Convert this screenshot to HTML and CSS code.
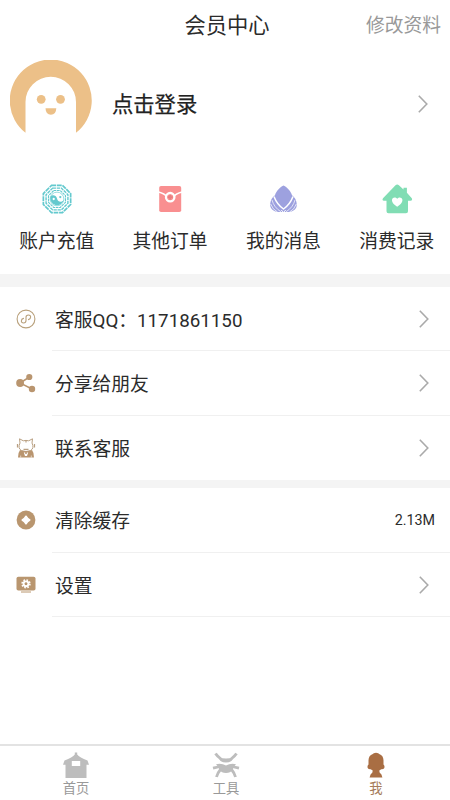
FILE: index.html
```html
<!DOCTYPE html>
<html lang="zh-CN">
<head>
<meta charset="utf-8">
<title>会员中心</title>
<link rel="stylesheet" href="styles.css">
</head>
<body>
<svg class="defs" width="0" height="0">
  <symbol id="chevron" viewBox="0 0 12 20"><path d="M1.8 1.8 9.8 10 1.8 18.2" fill="none" stroke="currentColor" stroke-width="1.6"/></symbol>
</svg>
<div class="app">
  <header class="header">
    <h1 class="title">会员中心</h1>
    <a class="edit">修改资料</a>
  </header>

  <section class="profile">
    <svg class="avatar" viewBox="0 0 82 82">
      <path d="M15.5 72.8A41 41 0 1 1 66 72.8V42a25.2 25.2 0 0 0-50.5 0Z" fill="#ecc088"/>
      <circle cx="31.2" cy="39.3" r="4.4" fill="#ecc088"/>
      <circle cx="50.5" cy="39.3" r="4.4" fill="#ecc088"/>
      <path d="M35.5 48.3h10.8q-.3 6.5-5.4 6.5t-5.4-6.5Z" fill="#ecc088"/>
    </svg>
    <span class="login">点击登录</span>
    <svg class="chevron"><use href="#chevron"/></svg>
  </section>

  <nav class="shortcuts">
    <a class="shortcut">
      <svg viewBox="-1 -1 34 34" fill="none" stroke="#63c9ce">
        <path d="M10.2 1.5h11.6l8.7 8.7v11.6l-8.7 8.7H10.2l-8.7-8.7V10.2Z" stroke-width="1.8" stroke-dasharray="5 .8"/>
        <path d="M11.4 4.4h9.2l7 7v9.2l-7 7h-9.2l-7-7v-9.2Z" stroke-width="1.5" stroke-dasharray="3.5 .8"/>
        <path d="M12.5 7h7l5.500 5.500v7L19.500 25h-7L7 19.500v-7Z" stroke-width="1.2" stroke-dasharray="2.8 .7"/>
        <circle cx="16" cy="16" r="7.3" fill="#fff" stroke-width=".7"/>
        <path d="M9 13.500c2-2.500 6-2 7 2s5 4.500 7.200 1.500A7.300 7.300 0 1 1 9 13.500Z" fill="#63c9ce" stroke="none"/>
        <circle cx="12.500" cy="16" r="1.200" fill="#fff" stroke="none"/>
        <circle cx="19.500" cy="14" r="1.200" fill="#63c9ce" stroke="none"/>
      </svg>
      <span>账户充值</span>
    </a>
    <a class="shortcut">
      <svg viewBox="0 0 32 32">
        <rect x="5.200" y="3" width="22" height="26" rx="1.800" fill="#f98f90"/>
        <path d="M4.500 9q6 1.500 8 4.500M28 9q-6 1.500-8 4.500" fill="none" stroke="#fff" stroke-width="1.800"/>
        <circle cx="16.200" cy="14.200" r="4.200" fill="#f98f90" stroke="#fff" stroke-width="2.300"/>
        <path d="M16.200 11.800v4.800M13.800 14.200h4.800" stroke="#e97f80" stroke-width="1.700"/>
      </svg>
      <span>其他订单</span>
    </a>
    <a class="shortcut">
      <svg viewBox="0 0 32 32">
        <path d="M16.500 2.500C20.500 4.500 24 8.500 25 12.200 28.500 14.500 30.500 19.500 29.500 24 28 28 23.500 29 21 29h-9C9.500 29 5 28 3.500 24 2.500 19.500 4.500 14.500 8 12.200 9 8.500 12.500 4.500 16.500 2.500Z" fill="#9da1df"/>
        <path d="M7 13.500Q10 21.500 16.500 26 23 21.500 26 13.500" fill="none" stroke="#fff" stroke-width="1.500"/>
        <path d="M14.300 27l2.200 2.500 2.200-2.500" fill="none" stroke="#fff" stroke-width="1"/>
        <path d="M5 17Q7 24.500 14 28.800M3.700 21Q5.500 26.500 10.500 29M28 17Q26 24.500 19 28.800M29.300 21Q27.500 26.500 22.500 29" fill="none" stroke="#fff" stroke-width=".7"/>
      </svg>
      <span>我的消息</span>
    </a>
    <a class="shortcut">
      <svg viewBox="0 0 32 32">
        <path d="M14.500 2.300q1.700-1.500 3.400 0L22.500 6.500V4.700h3.400V9.700l4.900 5.600q1 2-1.200 2.500H27v10.500q0 2-2 2H7.500q-2 0-2-2V17.800h-2.600q-2.200-.5-.9-2.500Z" fill="#81ddb4"/>
        <path d="M16.200 23.800C13.500 22 10.700 19.700 11 16.800c.5-3 4.200-3 5.200-.9 1-2.100 4.700-2.100 5.200.9.300 2.900-2.500 5.200-5.200 7Z" fill="#fff"/>
      </svg>
      <span>消费记录</span>
    </a>
  </nav>

  <section class="list contact">
    <a class="row">
      <svg class="icon" viewBox="0 0 20 20" fill="none" stroke="#b9a17c">
        <circle cx="10" cy="10" r="8.900" stroke-width="1.100"/>
        <path d="M7.500 9.400C4.700 10.100 4.600 14 7.500 14c1.600 0 2.500-1.100 2.500-2.500V8.300c0-1.300 1-2.300 2.500-2.300 2.900 0 2.800 3.800 0 4.600" stroke-width="1.100" stroke-linecap="round"/>
      </svg>
      <span class="label">客服QQ：1171861150</span>
      <svg class="chevron"><use href="#chevron"/></svg>
    </a>
    <a class="row">
      <svg class="icon" viewBox="0 0 20 20">
        <path d="M13.500 4 4 10l12 6" fill="none" stroke="#b9956f" stroke-width="1.500"/>
        <g fill="#b9956f"><circle cx="13.300" cy="4" r="3.100"/><circle cx="4.100" cy="10" r="3.900"/><circle cx="16" cy="16" r="3.200"/></g>
      </svg>
      <span class="label">分享给朋友</span>
      <svg class="chevron"><use href="#chevron"/></svg>
    </a>
    <a class="row">
      <svg class="icon" viewBox="0 0 20 20">
        <path d="M4 5 3.500.8 7.300 2.800q2.700-.8 5.400 0L16.500.8 16 5q2.500 5-1.300 7.500-4.700 2-9.400 0Q1.500 10 4 5Z" fill="#fff" stroke="#b9a082" stroke-width="1"/>
        <path d="M1.500 6v3.500M18.500 6v3.500M7.500 11.300h5M10 2.500v2" stroke="#b9a082" stroke-width="1.200"/>
        <path d="M4 12q6 2.500 12 0 2 2.500 2 7.500H2q0-5 2-7.500Z" fill="#b9956f"/>
        <path d="M7.800 14.500h4.400l-1.200 3.500h-2Z" fill="#fff"/>
        <path d="M4.700 17.500v2M15.300 17.500v2" stroke="#fff" stroke-width=".6"/>
        <circle cx="10" cy="15" r="1" fill="#b9956f"/>
      </svg>
      <span class="label">联系客服</span>
      <svg class="chevron"><use href="#chevron"/></svg>
    </a>
  </section>

  <section class="list system">
    <a class="row">
      <svg class="icon" viewBox="0 0 20 20">
        <circle cx="10" cy="10" r="9.400" fill="#b9966f"/>
        <path d="M10 6.200q1.300 2.500 3.800 3.800-2.500 1.300-3.800 3.800Q8.700 11.300 6.200 10q2.500-1.300 3.800-3.800Z" fill="#fff" stroke="#fff" stroke-width="1.500" stroke-linejoin="round"/>
      </svg>
      <span class="label">清除缓存</span>
      <span class="value">2.13M</span>
    </a>
    <a class="row">
      <svg class="icon" viewBox="0 0 20 20">
        <rect x=".5" y="1.800" width="19" height="13.800" rx="1.800" fill="#b9966f"/>
        <path d="M5 17h10" stroke="#b9966f" stroke-width="1"/>
        <circle cx="10" cy="8.800" r="3.900" fill="none" stroke="#fff" stroke-width="1.600" stroke-dasharray="1.600 1.463"/>
        <circle cx="10" cy="8.800" r="2.400" fill="none" stroke="#fff" stroke-width="2"/>
        <circle cx="10" cy="8.800" r="1.200" fill="#b9966f"/>
      </svg>
      <span class="label">设置</span>
      <svg class="chevron"><use href="#chevron"/></svg>
    </a>
  </section>

  <nav class="tabs">
    <a class="tab">
      <svg viewBox="0 0 28 28">
        <path d="M12.800 1.500h2.400v2Q17.500 6.700 25.500 9.500l1.500 4.300h-2.500V27h-21V13.800H1l1.500-4.300Q10.500 6.700 12.800 3.500ZM9.800 10v5h8.400v-5Z" fill="#bdbdbd" fill-rule="evenodd"/>
      </svg>
      <span>首页</span>
    </a>
    <a class="tab">
      <svg viewBox="0 0 28 28">
        <path d="M7 6.500q7 2 14 0Q20.500 11.500 14 11.500T7 6.500Z" fill="#bdbdbd"/>
        <path d="M4 13.200q5.500-1.200 10 1.300 4.500-2.500 10-1.300-2.500 2.300-3.500 5.800-2 3-6.500 3T7.500 19Q6.500 15.500 4 13.200Z" fill="#bdbdbd"/>
        <path d="M3.500 2.500q1.500 2.500 6 6M24.500 2.500q-1.500 2.500-6 6M1 17.200l7-1.700M27 17.200l-7-1.700M8.500 18.500Q5.500 22 4.500 26M19.500 18.500q3 3.500 4 7.500" fill="none" stroke="#bdbdbd" stroke-width="2.800"/>
      </svg>
      <span>工具</span>
    </a>
    <a class="tab active">
      <svg viewBox="0 0 28 28">
        <path d="M11.800 2.200q2.200-1 4.400 0l1 .8q4.200 1.600 4.300 6.300v4.200q1.500 1.500.8 3.500-.8 1.500-3 1.300l-2 1.200.3 2q2.300 1.300 2.800 5H7.600q.5-3.700 2.800-5l.3-2-2-1.200q-2.200.2-3-1.300-.7-2 .8-3.500V9.300q.1-4.700 4.300-6.300Z" fill="#a96e43"/>
      </svg>
      <span>我</span>
    </a>
  </nav>
</div>
</body>
</html>
```

FILE: styles.css
```css
* { box-sizing: border-box; }

body {
  margin: 0;
  background: #fff;
  color: #2b2b2b;
  font-family: Roboto, "Noto Sans CJK SC", sans-serif;
  font-size: 18.75px;
}

svg { display: block; flex: none; }
.defs { position: absolute; }

.app {
  display: flex;
  flex-direction: column;
  width: 450px;
  height: 800px;
}

.header {
  display: grid;
  grid-template-columns: 1fr auto 1fr;
  align-items: center;
  height: 50px;
  padding: 0 9px 4px 13px;
}
.title {
  grid-column: 2;
  margin: 0;
  font-size: 21.3px;
  font-weight: 400;
}
.edit { justify-self: end; color: #999; }

.profile {
  display: flex;
  align-items: center;
  height: 108px;
  padding: 0 21px 6px 10px;
}
.avatar { width: 82px; height: 82px; }
.login {
  flex: 1;
  margin-left: 20px;
  padding-top: 3px;
  font-size: 21.3px;
  color: #222;
  -webkit-text-stroke: 0.25px #222;
}
.chevron { width: 12px; height: 20px; color: #aaa; }
.profile .chevron { margin-top: 5px; }

.shortcuts {
  display: grid;
  grid-template-columns: repeat(4, 113.4px);
  height: 115.5px;
  padding-top: 25px;
}
.shortcut {
  display: flex;
  flex-direction: column;
  align-items: center;
  gap: 14px;
  line-height: 27px;
}
.shortcut svg { width: 32px; height: 32px; }

.list { flex: none; }
.contact { border-top: 13px solid #f4f4f4; border-bottom: 8px solid #f4f4f4; }
.row {
  display: flex;
  align-items: center;
  height: 64.5px;
  padding: 0 20px 0 16px;
  background: linear-gradient(#f0f0f0, #f0f0f0) 52px 100% / 100% 1px no-repeat;
}
.contact .row:last-child { background: none; }
.icon { width: 20px; height: 20px; }
.label { flex: 1; margin-left: 19px; padding-bottom: 1px; }
.value { margin-right: -5px; padding-bottom: 1px; font-size: 14.3px; }

.tabs {
  display: grid;
  grid-template-columns: repeat(3, 150px);
  height: 56px;
  margin-top: auto;
  padding-left: 1px;
  border-top: 2px solid #e3e3e3;
}
.tab {
  display: flex;
  flex-direction: column;
  align-items: center;
  padding-top: 5px;
  color: #999;
  font-size: 13.3px;
  line-height: 19px;
}
.tab svg { width: 28px; height: 28px; }
.tab.active { color: #a67c5b; }
```
